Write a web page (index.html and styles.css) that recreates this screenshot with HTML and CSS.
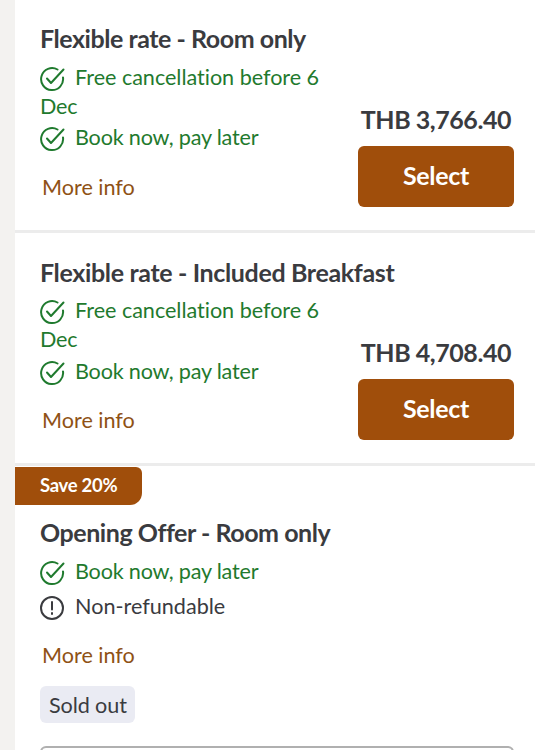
FILE: index.html
```html
<!DOCTYPE html>
<html lang="en">
<head>
<meta charset="utf-8">
<title>Rates</title>
<link rel="stylesheet" href="styles.css">
</head>
<body>
<main class="list">
  <section class="rate rate-first">
    <div class="info">
      <h2 class="name">Flexible rate - Room only</h2>
      <p class="perk good"><svg class="ico" viewBox="0 0 26 26"><path d="M23 11.5A11 11 0 1 1 17.5 3.5"/><path d="M7 12.5l4 4.5L23.5 3.5"/></svg><span class="free">Free cancellation before 6</span> Dec</p>
      <p class="perk good"><svg class="ico" viewBox="0 0 26 26"><path d="M23 11.5A11 11 0 1 1 17.5 3.5"/><path d="M7 12.5l4 4.5L23.5 3.5"/></svg>Book now, pay later</p>
      <a class="more">More info</a>
    </div>
    <div class="buy">
      <div class="price">THB 3,766.40</div>
      <button class="select">Select</button>
    </div>
  </section>
  <section class="rate">
    <div class="info">
      <h2 class="name name-long">Flexible rate - Included Breakfast</h2>
      <p class="perk good"><svg class="ico" viewBox="0 0 26 26"><path d="M23 11.5A11 11 0 1 1 17.5 3.5"/><path d="M7 12.5l4 4.5L23.5 3.5"/></svg><span class="free">Free cancellation before 6</span> Dec</p>
      <p class="perk good"><svg class="ico" viewBox="0 0 26 26"><path d="M23 11.5A11 11 0 1 1 17.5 3.5"/><path d="M7 12.5l4 4.5L23.5 3.5"/></svg>Book now, pay later</p>
      <a class="more">More info</a>
    </div>
    <div class="buy">
      <div class="price">THB 4,708.40</div>
      <button class="select">Select</button>
    </div>
  </section>
  <section class="rate rate-offer">
    <div class="badge">Save 20%</div>
    <div class="info">
      <h2 class="name">Opening Offer - Room only</h2>
      <p class="perk good"><svg class="ico" viewBox="0 0 26 26"><path d="M23 11.5A11 11 0 1 1 17.5 3.5"/><path d="M7 12.5l4 4.5L23.5 3.5"/></svg>Book now, pay later</p>
      <p class="perk warn"><svg class="ico" viewBox="0 0 26 26"><circle cx="12" cy="13" r="11"/><path d="M12 7v7.5"/><path d="M12 18v1"/></svg>Non-refundable</p>
      <a class="more">More info</a>
      <span class="sold">Sold out</span>
      <div class="next"></div>
    </div>
  </section>
</main>
</body>
</html>
```
FILE: styles.css
```css
* { box-sizing: border-box; }
html, body { margin: 0; height: 750px; overflow: hidden; }
body {
  background: #f3f2f0;
  font-family: Lato, "Liberation Sans", sans-serif;
  color: #3a3b3f;
}
.list { margin-left: 15px; background: #fff; height: 750px; overflow: hidden; }
.rate {
  display: flex;
  justify-content: space-between;
  height: 233px;
  padding: 24px 21px 0 25px;
  border-bottom: 3px solid #ececec;
}
.rate-first { padding-top: 23px; }
.rate-first .name + .perk { margin-top: 10px; }
.rate-first .perk + .perk { margin-top: 3px; }
.rate-first .more { margin-top: 21px; }
.rate-first .buy { padding-top: 80px; }
.rate-offer { display: block; padding: 0; border: 0; height: auto; }
.rate-offer .info { padding: 0 21px 0 25px; width: auto; }
.info { width: 282px; }
.name {
  margin: 0;
  font-size: 25px;
  font-weight: 700;
  line-height: 30px;
  letter-spacing: -0.45px;
  white-space: nowrap;
}
.name-long { letter-spacing: -0.35px; }
.perk {
  margin: 0;
  font-size: 21.6px;
  line-height: 28px;
}
.name + .perk { margin-top: 9px; }
.perk + .perk { margin-top: 4px; }
.good { color: #1f7a2e; letter-spacing: -0.2px; }
.free { letter-spacing: -0.03px; }
.warn { color: #3a3b3f; }
.ico {
  width: 26px;
  height: 26px;
  margin-right: 9px;
  vertical-align: -7px;
  fill: none;
  stroke: currentColor;
  stroke-width: 2;
  stroke-linecap: round;
  stroke-linejoin: round;
}
.more {
  display: block;
  margin: 20px 0 0 2px;
  font-size: 21.6px;
  line-height: 28px;
  color: #8f5216;
}
.buy {
  display: flex;
  flex-direction: column;
  align-items: flex-end;
  padding-top: 79px;
}
.price {
  margin-right: 3px;
  font-size: 25px;
  font-weight: 700;
  line-height: 32px;
  letter-spacing: -0.45px;
  white-space: nowrap;
}
.select {
  width: 156px;
  height: 61px;
  margin-top: 11px;
  padding: 0 0 3px;
  border: 0;
  border-radius: 6px;
  background: #a04e0b;
  color: #fff;
  font: 700 25px Lato, "Liberation Sans", sans-serif;
  letter-spacing: -0.3px;
}
.badge {
  width: 127px;
  height: 38px;
  margin-top: 1px;
  padding-left: 25px;
  background: #a04e0b;
  border-radius: 0 6px 12px 0;
  color: #fff;
  font-size: 18.5px;
  font-weight: 700;
  line-height: 37px;
  letter-spacing: -0.3px;
}
.rate-offer .name { margin-top: 12px; }
.rate-offer .name + .perk { margin-top: 10px; }
.rate-offer .perk + .perk { margin-top: 6px; }
.rate-offer .more { margin-top: 20px; }
.sold {
  display: inline-block;
  margin: 17px 0 0 0;
  padding: 0 8px 0 9px;
  height: 37px;
  border-radius: 6px;
  background: #eaebf3;
  font-size: 21.6px;
  line-height: 38px;
  letter-spacing: -0.1px;
}
.next {
  height: 40px;
  margin-top: 23px;
  border: 2px solid #b0b0b0;
  border-radius: 6px;
}
```
